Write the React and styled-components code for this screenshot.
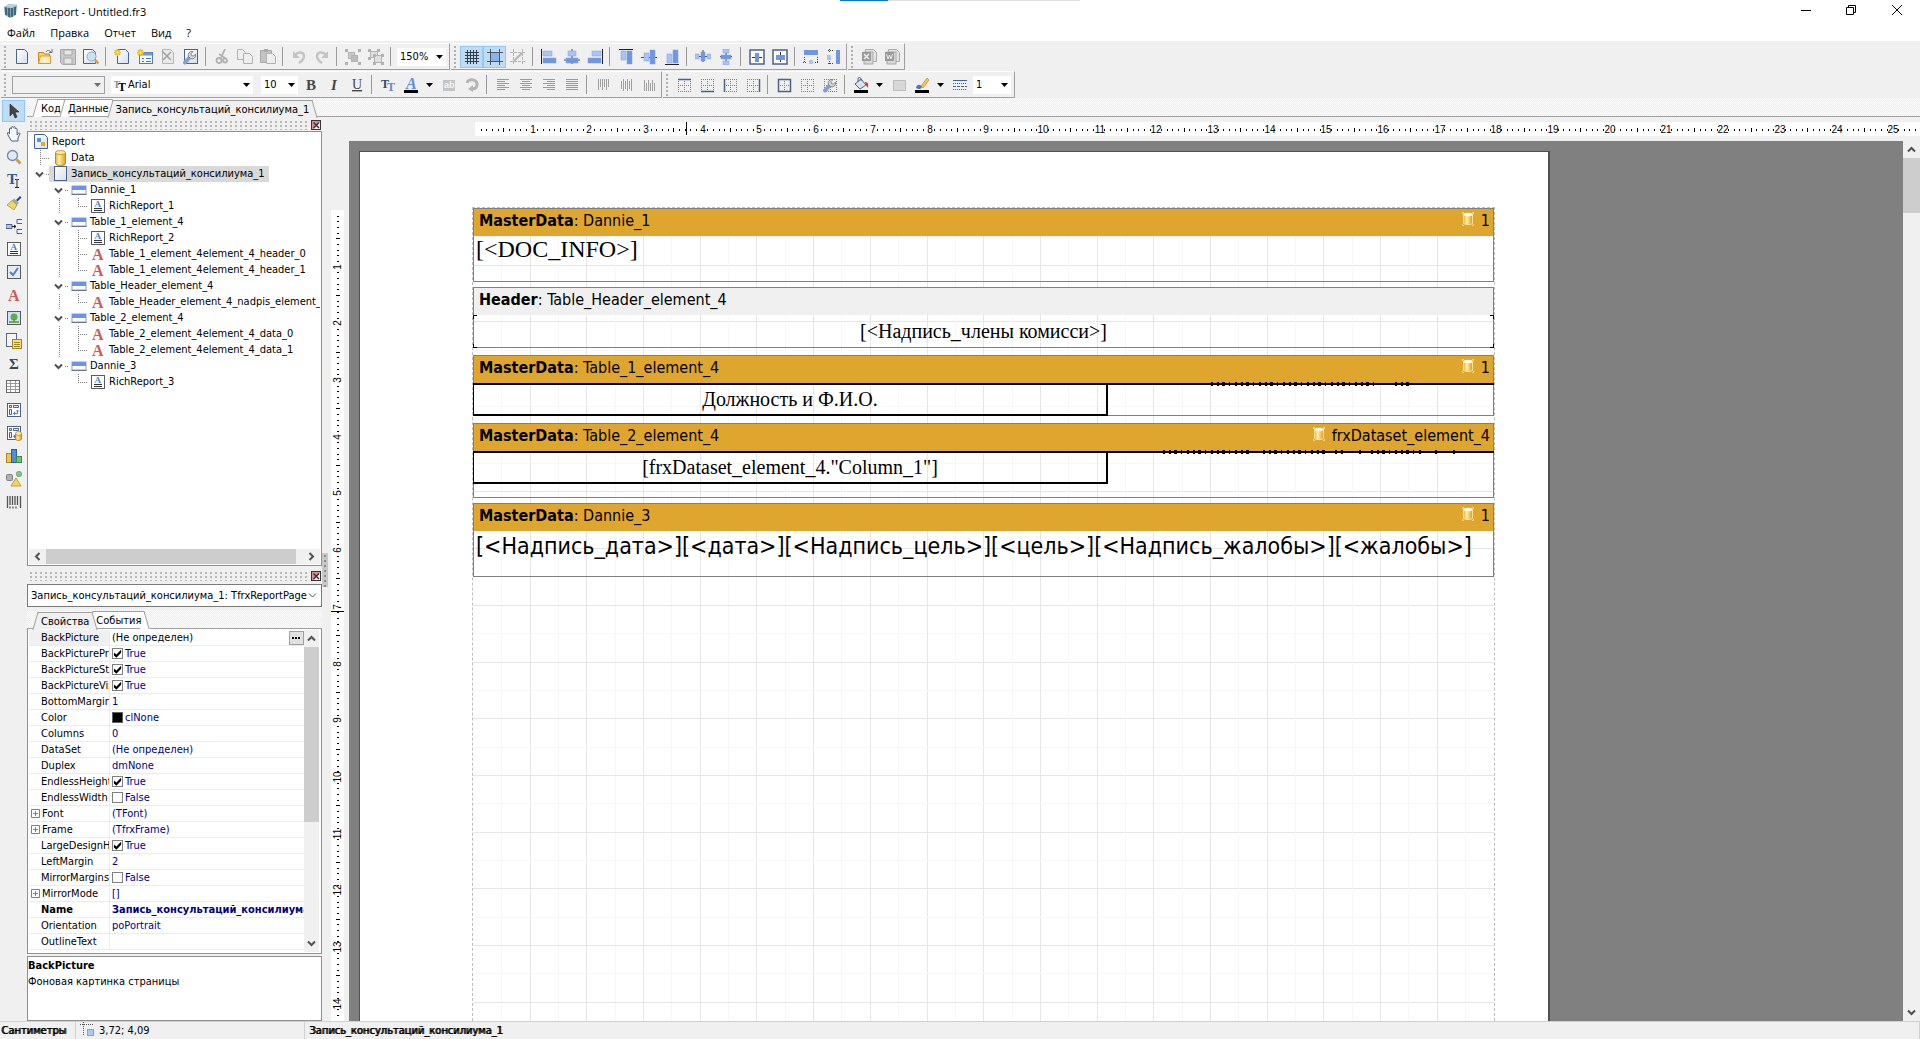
import React from 'react'
import styled, { createGlobalStyle, css } from 'styled-components'

const UI = '"DejaVu Sans Condensed", "Noto Sans", sans-serif'
const CM = 56.69

const GlobalStyle = createGlobalStyle`
    * { box-sizing: border-box; }
    body { margin: 0; font-family: ${UI}; font-size: 11px; color: #000; background: #f0f0f0; }
    button, select, input { font: inherit; color: inherit; margin: 0; padding: 0; border: 0; background: none; }
    ul { list-style: none; margin: 0; padding: 0; }
`

const hatch = css`
    background: repeating-conic-gradient(#fff 0 25%, #ececec 0 50%) 0 0 / 2px 2px;
`

const Window = styled.div`
    height: 100vh;
    display: flex;
    flex-direction: column;
    overflow: hidden;
`

/* ---------- title and menu ---------- */

const TitleBar = styled.header`
    position: relative;
    display: flex;
    align-items: flex-start;
    height: 24px;
    padding-left: 3px;
    background: #fff;
`

const Title = styled.h1`
    flex: 1;
    margin: 0;
    padding: 4px 0 0 5px;
    font: 400 11px/16px "Open Sans", "Noto Sans", sans-serif;
`

const AppIcon = styled.svg`
    margin-top: 3px;
`

const TopStrip = styled.div`
    position: absolute;
    top: 0;
    left: 840px;
    width: 240px;
    height: 1px;
    background: linear-gradient(90deg, #0078d7 20%, #e0e0e0 20%);
`

const WindowButton = styled.button`
    width: 45px;
    height: 20px;
    display: flex;
    align-items: center;
    justify-content: center;
    &:last-child { width: 47px; }
`

const Menu = styled.nav`
    display: flex;
    gap: 15px;
    height: 17px;
    padding-left: 7px;
    background: #fff;
`

const MenuItem = styled.button`
    font: 400 11px/17px "Open Sans", "Noto Sans", sans-serif;
`

/* ---------- toolbars ---------- */

const Toolbars = styled.div`
    display: flex;
    flex-direction: column;
    gap: 1px;
    padding: 2px 0 0 1px;
`

const ToolbarRow = styled.div`
    display: flex;
    gap: 1px;
`

const Band = styled.div`
    display: flex;
    align-items: center;
    height: 27px;
    padding-right: 1px;
    border-top: 1px solid #fff;
    border-right: 1px solid #a0a0a0;
    border-bottom: 1px solid #a0a0a0;
`

const Grip = styled.span`
    width: 3px;
    height: 22px;
    margin: 0 3px;
    background: radial-gradient(circle at 1px 1px, #b0b0b0 1px, transparent 1px) 0 0 / 3px 4px;
`

const Tool = styled.button`
    width: ${({ $narrow }) => ($narrow ? 15 : 23)}px;
    height: 22px;
    display: flex;
    align-items: center;
    justify-content: center;
    ${({ $on }) => $on && 'background: #c0dcf3; border: 1px solid #90c8f6;'}
`

const Separator = styled.span`
    width: 1px;
    height: 19px;
    margin: 0 4px 0 3px;
    background: #9a9a9a;
`

const Combo = styled.label`
    display: flex;
    align-items: center;
    width: ${({ $width }) => $width}px;
    height: 18px;
    margin: 0 ${({ $after }) => $after || 2}px 0 2px;
    padding: 0 3px;
    gap: 2px;
    background: ${({ $disabled }) => ($disabled ? '#f0f0f0' : '#fff')};
    border: ${({ $disabled }) => ($disabled ? '1px solid #a0a0a0' : '0')};
`

const Select = styled.select`
    flex: 1;
    min-width: 0;
    appearance: none;
    outline: 0;
`

const Arrow = ({ color = '#000' }) => (
    <svg width="7" height="4" viewBox="0 0 7 4"><path d="M0 0h7L3.5 4z" fill={color} /></svg>
)

const Chevron = ({ turn = 0, size = 9, color = '#505050', weight = 2 }) => (
    <svg width={size} height={size} viewBox="0 0 9 9">
        <path d="M1 2.5 4.5 6 8 2.5" transform={`rotate(${turn} 4.5 4.5)`} fill="none" stroke={color} strokeWidth={weight} />
    </svg>
)

/* ---------- icons ---------- */

const B1 = '#a9c4f7'
const B2 = '#6f97e0'
const NAVY = '#4a6288'
const OFF = '#b2b2b2'

const Sheet = ({ x = 2, y = 0, w = 12, h = 15, fill = 'url(#paper)', stroke = NAVY }) => (
    <path d={`M${x + 0.5} ${y + 0.5}h${w - 4}l3 3v${h - 4}h-${w - 1}z`} fill={fill} stroke={stroke} />
)

const Star = () => (
    <g stroke="#e8c02c" strokeWidth="1.6"><path d="M3.5 0v7M0 3.5h7M1 1l5 5M6 1 1 6" /><circle cx="3.5" cy="3.5" r="1" fill="#fff6b0" stroke="none" /></g>
)

const Cylinder = ({ x = 0, y = 0, w = 10, h = 14 }) => (
    <g transform={`translate(${x} ${y})`}>
        <path d={`M.5 2.5v${h - 5}a${w / 2 - 0.5} 2 0 0 0 ${w - 1} 0V2.5`} fill="url(#gold)" stroke="#c08a14" />
        <ellipse cx={w / 2} cy="2.5" rx={w / 2 - 0.5} ry="2" fill="#fbe9a8" stroke="#c08a14" strokeWidth=".8" />
    </g>
)

const Wrench = ({ color = '#7f9fd6', x = 0, y = 0 }) => (
    <g transform={`translate(${x} ${y})`}>
        <path d="M3 13.5 8 8" stroke={color} strokeWidth="4" strokeLinecap="round" />
        <path d="M8.5 9.5a3.6 3.6 0 0 0 5-4.4l-2 2-2-.5-.5-2 2-2a3.6 3.6 0 0 0-4.4 5z" fill="#d8d8d8" stroke="#6c7280" strokeWidth=".8" />
    </g>
)

const bars = (list) => list.map(([x, y, w, h], i) => (
    <rect key={i} x={x} y={y} width={w} height={h} fill={i % 2 ? B2 : B1} stroke="#7f9fe0" strokeWidth=".5" />
))

const textLines = (widths, align) => widths.map((w, i) => {
    const x = align === 'l' ? 2 : align === 'r' ? 14 - w : 8 - w / 2
    return <rect key={i} x={x} y={2 + i * 2} width={w} height="1" fill="#9a9a9a" />
})

const vertLines = (tops, heights) => tops.map((t, i) => (
    <rect key={i} x={3 + i * 2} y={t} width="1" height={heights[i]} fill="#a0a0a0" />
))

const dots = (
    <path d="M2 2.5h13M2 8.5h13M2 14.5h13M2.5 2v13M8.5 2v13M14.5 2v13" stroke="#808080" strokeDasharray="1 1" fill="none" />
)

const Glyph = styled.text`
    font-family: ${({ $sans }) => ($sans ? '"Liberation Sans", sans-serif' : '"Liberation Serif", serif')};
    font-weight: ${({ $light }) => ($light ? 400 : 700)};
    font-size: ${({ $size }) => $size || 15}px;
    font-style: ${({ $italic }) => ($italic ? 'italic' : 'normal')};
    text-decoration: ${({ $line }) => ($line ? 'underline' : 'none')};
`

const RichBox = (
    <>
        <rect x="1.5" y="1.5" width="13" height="13" fill="#fff" stroke="#5a5a5a" />
        <Glyph x="4.5" y="9" $size="9" fill="#4a78b8">A</Glyph>
        <path d="M4 10.5h8M4 12.5h8" stroke="#333" />
    </>
)

const CrossBox = (
    <>
        <rect x="1.5" y="1.5" width="13" height="13" fill="#fff" stroke={NAVY} />
        <path d="M3.5 3.5h2v2h-2zM7.5 3.5h5v2h-5zM3.5 7.5h2v5h-2z" fill="none" stroke={NAVY} />
        <path d="M7.5 11.5h4v-3M10 9.5l1.5-1.5L13 9.5M9 10l-1.5 1.5L9 13" fill="none" stroke="#4a78c8" />
    </>
)

const ICONS = {
    new: <Sheet />,
    open: <><path d="M1.5 14.5v-11h5l1 1.5h5v9z" fill="#f7cf6a" stroke="#c88a1a" /><path d="M3.5 7h10v7.5h-12z" fill="#fdf0c0" stroke="#d79a2a" /><path d="M9 3c1-2 3-2 5 0M15 0v3.5h-3" fill="none" stroke="#5a7090" /></>,
    save: <><path d="M.5.5h15v15h-13l-2-2z" fill="#c8c8c8" stroke="#a8a8a8" /><path d="M4 1h8v5H4zM4 9h8v6H4z" fill="#e6e6e6" stroke="#aaa" /></>,
    preview: <><Sheet x={0} w={13} /><circle cx="8.5" cy="7.5" r="4.5" fill="#c4e2f8" stroke="#9ab" /><path d="m12 11 3.500 3.5" stroke="#d8a050" strokeWidth="2.5" /></>,
    newPage: <><Sheet x={3} /><Star /></>,
    newDialog: <><rect x="2.5" y="3.5" width="13" height="11" fill="#f4f8ff" stroke="#5a7ab0" /><path d="M3 5h12" stroke="#6f97e0" strokeWidth="3" /><path d="M5 9.5h2M9 9.5h5M5 12.5h2M9 12.5h5" stroke="#4a78c8" /><Star /></>,
    deletePage: <><Sheet fill="#eaeaea" stroke="#b4b4b4" /><path d="m2 2 9 9M11 3 3 11" stroke="#a0a0a0" strokeWidth="1.5" /></>,
    pageSettings: <><rect x="1.500" y=".5" width="13" height="14" fill="url(#paper)" stroke={NAVY} /><Wrench x={-1} y={0} /></>,
    cut: <g stroke={OFF} fill="none" strokeWidth="1.8"><path d="m11 0-4 9M5 5l6 4" /><circle cx="5" cy="11.5" r="2.5" /><circle cx="11" cy="11.5" r="2" /></g>,
    copy: <><Sheet x={0} w={9} h={11} fill="#eee" stroke={OFF} /><Sheet x={6} y={4} w={10} h={11} fill="#eee" stroke={OFF} /></>,
    paste: <><path d="M.5 1.5h11v12H.5z" fill="#c4c4c4" stroke="#a8a8a8" /><path d="M4 0h4v3H4z" fill="#aaa" /><Sheet x={6} y={4} w={10} h={11} fill="#eee" stroke={OFF} /></>,
    undo: <><path d="M4 6c3-4 9-3 9 1 0 3-2 5-5 7" fill="none" stroke="#c4c4c4" strokeWidth="2.5" /><path d="M2 2v7h7z" fill="#c4c4c4" /></>,
    redo: <><path d="M12 6c-3-4-9-3-9 1 0 3 2 5 5 7" fill="none" stroke="#c4c4c4" strokeWidth="2.5" /><path d="M14 2v7H7z" fill="#c4c4c4" /></>,
    group: <g stroke={OFF}><rect x="3.5" y="3.5" width="6" height="6" fill="#ccc" /><rect x="6.5" y="6.5" width="6" height="6" fill="#bbb" /><path d="M0 0h3v3H0zM13 0h3v3h-3zM0 13h3v3H0zM13 13h3v3h-3z" fill={OFF} stroke="none" /></g>,
    ungroup: <g stroke={OFF} fill="#e0e0e0"><rect x="2.5" y="2.5" width="7" height="6" /><rect x="6.5" y="6.5" width="7" height="7" /><path d="M0 0h3v3H0zM9 0h3v3H9zM0 8h3v3H0zM5 5h3v3H5zM13 5h3v3h-3zM5 13h3v3H5zM13 13h3v3h-3z" fill={OFF} stroke="none" /></g>,
    grid: <path d="M1 3.5h14M1 6.5h14M1 9.5h14M1 12.5h14M3.5 1v14M6.5 1v14M9.5 1v14M12.5 1v14" stroke="#333c48" fill="none" />,
    snap: <><rect x="4" y="4" width="8" height="8" fill="#8db2f2" /><path d="M0 3.5h16M0 12.5h16M3.5 0v16M12.5 0v16" stroke="#4a5868" /></>,
    fit: <g stroke="#b4b4b4" fill="none"><path d="M0 3.5h16M0 12.5h16M3.5 0v16M12.5 0v16" strokeDasharray="3 1" /><path d="m4 12 8-8" strokeWidth="2" /></g>,
    alignLeft: <><path d="M.5 0v15" stroke="#222" />{bars([[2, 2, 9, 5], [2, 9, 13, 5]])}</>,
    alignCenter: <><path d="M8 0v15M0 11h16" stroke="#444" />{bars([[4, 2, 8, 5], [2, 9, 12, 5]])}</>,
    alignRight: <><path d="M15.5 0v15" stroke="#222" />{bars([[5, 2, 9, 5], [1, 9, 13, 5]])}</>,
    alignTop: <><path d="M1 .5h14" stroke="#222" />{bars([[3, 2, 5, 9], [9, 2, 5, 13]])}</>,
    alignMiddle: <><path d="M0 8.5h16" stroke="#444" />{bars([[3, 4, 5, 8], [9, 1, 5, 14]])}</>,
    alignBottom: <><path d="M1 15.5h14" stroke="#222" />{bars([[3, 5, 5, 9], [9, 1, 5, 13]])}</>,
    spaceH: <><path d="M2 7.5h12M8 1v12" stroke="#444" />{bars([[0, 5, 4, 5], [6, 3, 4, 9], [12, 5, 4, 5]])}</>,
    spaceV: <><path d="M8 2v12M2 7.5h12" stroke="#444" />{bars([[5, 0, 6, 4], [3, 6, 10, 4], [5, 12, 6, 4]])}</>,
    centerH: <><rect x="1" y="1" width="14" height="14" fill="#fff" stroke={NAVY} strokeWidth="1.5" /><path d="M3 8.5h10" stroke="#333" /><rect x="6" y="4" width="4" height="9" fill={B2} /></>,
    centerV: <><rect x="1" y="1" width="14" height="14" fill="#fff" stroke={NAVY} strokeWidth="1.5" /><path d="M8.5 3v10" stroke="#333" /><rect x="4" y="6" width="9" height="5" fill={B2} /></>,
    sameWidth: <><rect x="1" y="1" width="14" height="5" fill={B2} /><path d="M1.5 8v5M14.5 8v5M0 13.5h4M12 13.5h4" stroke="#444" strokeDasharray="1 1" /><rect x="6" y="11" width="4" height="4" fill={B1} /></>,
    sameHeight: <><rect x="10" y="1" width="4" height="14" fill={B2} /><path d="M2 1.5h6M2 14.5h6M3.5 0v4M3.5 12v4" stroke="#444" strokeDasharray="1 1" /><rect x="1" y="6" width="4" height="5" fill={B1} /></>,
    excel: <><path d="M4.5.5h8l3 3v9h-11z" fill="#e4e4e4" stroke="#aaa" /><rect x="3" y="3" width="9" height="12" fill="#d8d8d8" stroke="#aaa" /><rect x="1" y="3" width="9" height="9" fill="#999" /><path d="m3 5 5 5M8 5l-5 5" stroke="#eee" strokeWidth="1.5" /></>,
    word: <><path d="M4.5.5h8l3 3v9h-11z" fill="#e4e4e4" stroke="#aaa" /><rect x="3" y="3" width="9" height="12" fill="#d8d8d8" stroke="#aaa" /><rect x="1" y="3" width="9" height="9" fill="#999" /><path d="m2.5 5 1.5 5 1.5-4L7 10l1.5-5" stroke="#eee" fill="none" /></>,
    bold: <Glyph x="3" y="13" fill="#484848">B</Glyph>,
    italic: <Glyph x="5" y="13" $italic fill="#484848">I</Glyph>,
    underline: <Glyph x="3" y="12" $light $line $size="14" fill="#484848">U</Glyph>,
    fontSettings: <><Glyph x="1" y="11" $size="12" fill="#2e4a6e">T</Glyph><Glyph x="7" y="14" $size="12" fill="#6a8cc0">T</Glyph></>,
    fontColor: <><Glyph x="3" y="12" $italic $size="16" fill="#5b8ede">A</Glyph><path d="M1 13h14v3H1z" fill="#000" /></>,
    highlight: <><rect x="2" y="3" width="12" height="11" fill="#c4c4c4" /><Glyph x="3" y="11" $sans $size="9" fill="#f4f4f4">ab</Glyph></>,
    rotate: <><path d="M3 6c1-5 11-4 10 2 0 3-3 4-6 4" fill="none" stroke="#b4b4b4" strokeWidth="3" /><path d="M9 8v7l-5-3z" fill="#b4b4b4" /></>,
    textLeft: textLines([12, 8, 12, 8, 12, 8], 'l'),
    textCenter: textLines([12, 8, 12, 8, 12, 8], 'c'),
    textRight: textLines([12, 8, 12, 8, 12, 8], 'r'),
    textBlock: textLines([12, 12, 12, 12, 12, 12], 'l'),
    textTop: vertLines([2, 2, 2, 2, 2, 2], [11, 8, 11, 8, 11, 8]),
    textMiddle: vertLines([4, 2, 4, 2, 4, 2], [8, 12, 8, 12, 8, 12]),
    textBottom: vertLines([3, 6, 3, 6, 3, 6], [11, 8, 11, 8, 11, 8]),
    frameTop: <>{dots}<path d="M2 2.5h13" stroke={NAVY} strokeWidth="1.5" /></>,
    frameBottom: <>{dots}<path d="M2 14.5h13" stroke={NAVY} strokeWidth="1.5" /></>,
    frameLeft: <>{dots}<path d="M2.5 2v13" stroke={NAVY} strokeWidth="1.5" /></>,
    frameRight: <>{dots}<path d="M14.5 2v13" stroke={NAVY} strokeWidth="1.5" /></>,
    frameAll: <>{dots}<rect x="2.5" y="2.5" width="12" height="12" fill="none" stroke={NAVY} strokeWidth="1.5" /></>,
    frameNone: dots,
    frameEdit: <>{dots}<Wrench /></>,
    fillColor: <><path d="m2 7 6-5 5 6-6 4z" fill="#d7e4f2" stroke="#53657c" /><path d="M5 5V2c0-3 4-2 3 2" fill="none" stroke="#53657c" /><path d="M12 5c4 0 3 4 3 6l-2-3z" fill="#d62a1c" /><path d="M1 13h14v3H1z" fill="#000" /></>,
    fillSettings: <rect x="2.5" y="3.5" width="12" height="10" fill="#d8d8d8" stroke="#bdbdbd" />,
    lineColor: <><path d="M7 9 13 1l2 2-6 8z" fill="#f3c456" stroke="#b08020" strokeWidth=".6" /><path d="M2 11c1-4 4-4 6-1-1 2-3 3-6 1z" fill="#4f74ac" /><path d="M1 13h14v3H1z" fill="#000" /></>,
    lineStyle: <><path d="M1 3.5h14" stroke="#3e62a8" /><path d="M1 6.5h14M1 12.5h14" stroke="#3e62a8" strokeDasharray="1 1" /><path d="M1 9.5h14" stroke="#3e62a8" strokeDasharray="3 1" /></>,
    arrow: <path d="M4 1v12l3-3 2 5 2-1-2-5h4z" fill="#444" stroke="#222" strokeWidth=".6" />,
    hand: <path d="M5 15 2 10 .8 7c.5-1 1.500-.5 2.200.8V3c0-1.200 1.600-1.200 1.800 0V1.500c.3-1.200 1.800-1 1.900 0 .3-1.300 2-1.200 2 0V3c.3-1 1.800-1 1.900.3V9c1-2 2-2.500 3-1.500L11.500 12v3z" fill="#f4f7fc" stroke="#4a6288" transform="translate(.5)" />,
    zoom: <><circle cx="6.5" cy="6.5" r="5" fill="#dceafa" stroke="#7888a0" strokeWidth="1.3" /><path d="m10.5 10.5 4 4" stroke="#c8a040" strokeWidth="3" /></>,
    textEdit: <><Glyph x="1" y="12" $size="15" fill="#2e5a8e">T</Glyph><path d="M9 7.5h1.500l.5.500.5-.500H13M11 8v7M9 15.5h4" stroke="#222" fill="none" /></>,
    brush: <><path d="m10 5 4-4 1.500 1.500-4 4z" fill="#3b3f7c" /><path d="M8 3.500 13 8l-2 2-5-4.500z" fill="#9aa6c0" /><path d="m6 5.500 5 4.500-3 5-7-5z" fill="#efd668" stroke="#a88a24" strokeWidth=".7" /></>,
    insertBand: <><path d="M0 6.5h6v4H0z" fill={B1} stroke={NAVY} /><path d="M6 8.5h4M8 7l2 1.500L8 10" stroke="#222" fill="none" /><path d="M16 1.5h-5v4h5M16 11.5h-5v4h5" fill="#eef4ff" stroke={NAVY} /></>,
    rich: RichBox,
    check: <><rect x="1.5" y="1.5" width="13" height="13" fill="#e6ecf6" stroke="#5a5a5a" /><path d="m4 8 3 3 5-7" fill="none" stroke="#5a7ac8" strokeWidth="2" /></>,
    memo: <Glyph x="2" y="14" $size="16" fill="#cf5a5a">A</Glyph>,
    picture: <><rect x="1.5" y="1.5" width="13" height="13" fill="#cfe4fa" stroke="#5a5a5a" /><path d="M3 11h10v2H3z" fill="#78a848" /><circle cx="8" cy="7" r="3.5" fill="#5cae4a" /><path d="M8 9v3" stroke="#8a6030" /></>,
    subreport: <><rect x=".5" y=".5" width="10" height="13" fill="#f4f6fa" stroke="#5a6a80" /><rect x="6.5" y="6.5" width="9" height="9" fill="#f8e27c" stroke="#a08420" /><path d="M8 9.5h6M8 11.5h6M8 13.5h6" stroke="#a08420" /></>,
    sum: <Glyph x="3" y="13" $size="15" fill="#444">Σ</Glyph>,
    table: <><rect x=".5" y="1.5" width="13" height="12" fill="#fff" stroke="#6a6a6a" /><path d="M1 4.5h12M1 7.5h12M1 10.5h12M4.5 2v11M9.5 2v11" stroke="#9a9a9a" /></>,
    cross: CrossBox,
    dbCross: <>{CrossBox}<Cylinder x={9} y={6} w={7} h={10} /></>,
    chart: <><rect x=".5" y="5.5" width="5" height="9" fill="#f0c648" stroke="#b08820" /><rect x="5.5" y="1.5" width="5" height="13" fill="#4f8ce0" stroke="#2a5cb0" /><rect x="10.5" y="8.5" width="5" height="6" fill="#78c078" stroke="#3c8c3c" /></>,
    shapes: <><rect x=".5" y="3.5" width="6" height="6" rx="1" fill="#b0b0b0" stroke="#808080" /><circle cx="13" cy="3" r="2.700" fill="#7cc88a" stroke="#4f9e60" strokeWidth=".6" /><path d="m10 7 5 8H5z" fill="#f4d468" stroke="#d09840" /></>,
    barcode: <path d="M1.5 2v12M4 2v9M6.5 2v9M9 2v9M11.5 2v9M14.5 2v12M4 12.5v2M7 12.5v2M10 12.5v2" stroke="#555" strokeWidth="1.3" />,
    report: <><Sheet x={1} w={14} /><path d="M4 4h4v4H4z" fill="#4a9ed8" /><path d="M8 8h4v4H8z" fill="#f0a818" /></>,
    data: <Cylinder x={3} y={0} w={11} h={16} />,
    page: <rect x="2.5" y=".5" width="12" height="14" fill="url(#paper)" stroke={NAVY} />,
    band: <><rect x="1" y="4" width="14" height="8" fill="#fff" stroke="#8aa0c8" /><rect x="1" y="4" width="14" height="4" fill="#6c94e0" /><path d="M.5 12.5h15" stroke="#66758e" /></>,
}

const Icon = ({ name }) => (
    <svg width="16" height="16" viewBox="0 0 16 16" aria-hidden="true">{ICONS[name]}</svg>
)

const HiddenSvg = styled.svg`
    position: absolute;
`

const Defs = () => (
    <HiddenSvg width="0" height="0" aria-hidden="true">
        <defs>
            <linearGradient id="paper" x1="0" y1="0" x2="1" y2="1">
                <stop offset="0" stopColor="#fff" /><stop offset="1" stopColor="#d4dff2" />
            </linearGradient>
            <linearGradient id="gold">
                <stop offset="0" stopColor="#e8b02c" /><stop offset=".35" stopColor="#fff0b0" /><stop offset="1" stopColor="#e09c10" />
            </linearGradient>
        </defs>
    </HiddenSvg>
)

/* ---------- left tool column, tabs ---------- */

const Main = styled.main`
    flex: 1;
    min-height: 0;
    display: flex;
`

const ToolColumn = styled.div`
    width: 27px;
    display: flex;
    flex-direction: column;
    gap: 1px;
    padding: 2px 2px 0;
`

const Content = styled.div`
    flex: 1;
    min-width: 0;
    display: flex;
    flex-direction: column;
`

const Tabs = styled.div`
    display: flex;
    align-items: flex-end;
    height: 19px;
    padding-left: 8px;
    border-bottom: 1px solid #a0a0a0;
    ${hatch}
`

const Tab = styled.button`
    display: flex;
    height: 17px;
    margin-right: -5px;
    margin-bottom: ${({ $on }) => ($on ? -1 : 0)}px;
    line-height: 17px;
    position: relative;
    z-index: ${({ $on }) => ($on ? 1 : 0)};
    span {
        margin: 0 -3px;
        z-index: 1;
        border-top: 1px solid #a0a0a0;
        background: ${({ $on }) => ($on ? '#f0f0f0' : '#fff')};
    }
    &::before, &::after {
        content: '';
        width: 8px;
        height: 17px;
        border-top: 1px solid #a0a0a0;
        background: ${({ $on }) => ($on ? '#f0f0f0' : '#fff')};
    }
    &::before { border-left: 1px solid #a0a0a0; transform: skewX(-16deg); }
    &::after { border-right: 1px solid #a0a0a0; transform: skewX(16deg); }
`

const Columns = styled.div`
    flex: 1;
    min-height: 0;
    display: flex;
`

/* ---------- side panels ---------- */

const Side = styled.aside`
    width: 295px;
    display: flex;
    flex-direction: column;
`

const DragBar = styled.div`
    display: flex;
    align-items: center;
    height: ${({ $tall }) => ($tall ? 18 : 14)}px;
    padding: 2px 1px 0 3px;
    gap: 2px;
    &::before {
        content: '';
        flex: 1;
        height: 9px;
        background: radial-gradient(circle at 1px 1px, #b8b8b8 1px, transparent 1px) 0 0 / 5px 4px;
    }
`

const CloseButton = styled.button`
    width: 10px;
    height: 10px;
    display: flex;
`

const CloseBox = ({ label }) => (
    <CloseButton aria-label={label}>
        <svg width="10" height="10" viewBox="0 0 10 10">
            <rect x=".5" y=".5" width="9" height="9" fill="#f6f0f0" stroke="#3a3038" />
            <path d="M1 1h8v1L3 9H1z" fill="#d89090" />
            <path d="m2.5 2.5 5.5 5.5M8 2.5 2.5 8" stroke="#3a3038" strokeWidth="1.4" />
        </svg>
    </CloseButton>
)

const TreeBox = styled.div`
    height: 435px;
    display: flex;
    flex-direction: column;
    padding: 1px;
    background: #fff;
    border: 1px solid #909090;
`

const Tree = styled.ul`
    flex: 1;
    overflow: hidden;
    padding: 1px 0 0 1px;
`

const TreeRow = styled.li`
    display: flex;
    height: 16px;
    line-height: 16px;
    white-space: nowrap;
`

const Node = styled.span`
    display: flex;
    gap: 3px;
    padding: 0 4px 0 3px;
    background: ${({ $on }) => ($on ? '#d9d9d9' : 'none')};
    svg { flex: none; }
`

const vDots = 'repeating-linear-gradient(#808080 0 1px, transparent 1px 2px)'
const hDots = 'repeating-linear-gradient(90deg, #808080 0 1px, transparent 1px 2px)'
const guides = {
    ' ': 'none',
    '|': `${vDots} 10px 0 / 1px 16px no-repeat`,
    T: `${vDots} 10px 0 / 1px 16px no-repeat, ${hDots} 10px 8px / 12px 1px no-repeat`,
    L: `${vDots} 10px 0 / 1px 8px no-repeat, ${hDots} 10px 8px / 12px 1px no-repeat`,
    v: `${hDots} 16px 8px / 3px 1px no-repeat`,
}

const Guide = styled.span`
    width: 19px;
    flex: none;
    padding: 4px 0 0 5px;
    line-height: 0;
    background: ${({ $kind }) => guides[$kind]};
`

const ScrollBar = styled.div`
    display: flex;
    flex: none;
    flex-direction: ${({ $vertical }) => ($vertical ? 'column' : 'row')};
    ${({ $vertical }) => ($vertical ? 'width' : 'height')}: ${({ $size }) => $size || 15}px;
    background: #f0f0f0;
`

const ScrollButton = styled.button`
    width: 17px;
    height: 17px;
    flex: none;
    align-self: center;
    display: flex;
    align-items: center;
    justify-content: center;
`

const Thumb = styled.span`
    flex: ${({ $part }) => $part} 0 0;
    background: #cdcdcd;
`

const Rest = styled.span`
    flex: ${({ $part }) => $part} 0 0;
`

const ObjectCombo = styled.label`
    display: flex;
    align-items: center;
    height: 23px;
    margin-bottom: 3px;
    padding: 0 4px 0 3px;
    gap: 1px;
    background: #fff;
    border: 1px solid #7a7a7a;
`

const Inspector = styled.div`
    flex: 1;
    min-height: 0;
    display: flex;
    margin-bottom: 2px;
    padding: 1px 2px 1px 1px;
    background: #fff;
    border: 1px solid #909090;
    border-top: 0;
`

const PropsView = styled.div`
    flex: 1;
    min-width: 0;
    overflow: hidden;
`

const PropTable = styled.table`
    width: 100%;
    table-layout: fixed;
    border-spacing: 0;
`

const PropName = styled.th`
    width: 81px;
    height: 16px;
    padding: 0 0 0 ${({ $expand }) => ($expand ? 2 : 12)}px;
    overflow: hidden;
    white-space: nowrap;
    text-align: left;
    line-height: 15px;
    font-weight: ${({ $bold }) => ($bold ? 700 : 400)};
    background: ${({ $on }) => ($on ? '#f0f0f0' : '#fff')};
    border-bottom: 1px solid #ececec;
    border-right: 1px solid #ececec;
    svg { margin-right: 2px; vertical-align: -1px; }
`

const PropValue = styled.td`
    padding: 0 0 0 2px;
    overflow: hidden;
    white-space: nowrap;
    line-height: 15px;
    font-weight: ${({ $bold }) => ($bold ? 700 : 400)};
    color: ${({ $on }) => ($on ? '#000' : '#000080')};
    border-bottom: 1px solid #ececec;
    label, div { display: flex; align-items: center; gap: 2px; }
`

const Check = styled.input`
    appearance: none;
    width: 11px;
    height: 11px;
    border: 1px solid #808080;
    background: #fff;
    &:checked::before {
        content: '';
        display: block;
        height: 9px;
        background: #000;
        clip-path: polygon(10% 40%, 38% 62%, 90% 8%, 90% 42%, 38% 96%, 10% 72%);
    }
`

const Swatch = styled.span`
    width: 11px;
    height: 11px;
    background: #000;
    border: 1px solid #606060;
`

const DotsButton = styled.button`
    width: 15px;
    height: 14px;
    margin-left: auto;
    background: #e1e1e1;
    border: 1px solid #a0a0a0;
    line-height: 0;
`

const Plus = () => (
    <svg width="9" height="9" viewBox="0 0 9 9"><path d="M.5.5h8v8h-8zM2 4.5h5M4.5 2v5" fill="none" stroke="#808080" /></svg>
)

const Hint = styled.div`
    height: 65px;
    padding: 1px 0;
    line-height: 16px;
    background: #fff;
    border: 1px solid #909090;
`

const Splitter = styled.div`
    width: 9px;
    padding-top: 436px;
    &::before {
        content: '';
        display: block;
        width: 6px;
        height: 34px;
        background: radial-gradient(circle at 3px 3px, #8c8c8c 1px, #c8c8c8 1px) 0 0 / 6px 5px;
    }
`

/* ---------- designer ---------- */

const Designer = styled.section`
    flex: 1;
    min-width: 0;
    display: grid;
    grid-template-columns: 18px 1fr 17px;
    grid-template-rows: 24px 1fr;
`

const TopRuler = styled.div`
    grid-column: 2 / 4;
    margin: 5px 0 5px 126px;
    overflow: hidden;
    background: #fff;
`

const SideRuler = styled.div`
    grid-column: 1;
    margin: 69px 5px 0 0;
    overflow: hidden;
    background: #fff;
`

const Workspace = styled.div`
    min-width: 0;
    min-height: 0;
    overflow: hidden;
    padding: 10px 0 0 10px;
    background: #808080;
`

const Page = styled.div`
    width: 1191px;
    height: 100%;
    display: flex;
    padding: 55px 53px 0 112px;
    background: #fff;
    border: 1px solid #505050;
    border-right-width: 2px;
    border-bottom: 0;
`

const PrintArea = styled.div`
    position: relative;
    flex: 1;
    min-width: 0;
    border: 1px dashed #bdbdbd;
    border-bottom: 0;
`

const GridLayer = styled.svg`
    position: absolute;
    inset: 0;
    width: 100%;
    height: 100%;
`

const ReportBand = styled.section`
    position: relative;
    height: ${({ $height }) => $height}px;
    margin-bottom: ${({ $after }) => $after}px;
    border: 1px solid #808080;
`

const BandHeader = styled.h2`
    display: flex;
    gap: 7px;
    height: 27px;
    margin: 0;
    padding: 2px 3px 0 5px;
    font-size: 16px;
    font-weight: 400;
    line-height: 20px;
    background: ${({ $plain }) => ($plain ? '#f0f0f0' : '#dfa62f')};
    > :first-child { flex: 1; }
    svg { margin-top: 1px; }
`

const RichText = styled.div`
    padding-left: 2px;
    font: ${({ $serif }) => ($serif ? '24px/26px "Liberation Serif", serif' : `23px/31px ${UI}`)};
    white-space: nowrap;
`

const MemoText = styled.div`
    height: 31px;
    font: 20px/32px "Liberation Serif", serif;
    text-align: center;
    white-space: nowrap;
`

const TableLine = styled.div`
    margin: 0 -1px;
    border-top: 2px solid #000;
`

const TableCell = styled(MemoText)`
    width: 635px;
    line-height: 28px;
    border: solid #000;
    border-width: 0 2px 2px 1px;
`

const Sliver = styled.svg`
    position: absolute;
    top: 26px;
    right: ${({ $right }) => $right}px;
`

const Corner = styled.span`
    position: absolute;
    width: 4px;
    height: 4px;
    ${({ $at }) => $at.split(' ').map((side) => `border-${side}: 1px solid #000;`).join('')}
    ${({ $at }) => ($at.includes('left') ? 'left: -1px;' : 'right: -1px;')}
    ${({ $at }) => ($at.includes('top') ? 'top: 27px;' : 'bottom: -1px;')}
`

const RulerLabel = styled.text`
    font: 10px "Liberation Sans", sans-serif;
    text-anchor: middle;
`

function Ruler ({ vertical, length, cursor }) {
    const marks = []
    for (let i = 1; i < length * 10; i++) {
        const at = Math.round(i * CM / 10)
        const tall = i % 5 === 0
        marks.push({ i, at, start: tall ? 5 : 6, size: tall ? 4 : 2, label: i % 10 === 0 ? i / 10 : null })
    }
    // the side ruler has its numbers reading upwards
    if (vertical) {
        return (
            <svg width="13" height="100%">
                {marks.map((m) => (m.label
                    ? <RulerLabel key={m.i} transform={`translate(10 ${m.at}) rotate(-90)`}>{m.label}</RulerLabel>
                    : <rect key={m.i} x={m.start} y={m.at} width={m.size} height="1" />
                ))}
                <rect x="0" y={cursor} width="13" height="1" />
            </svg>
        )
    }
    return (
        <svg width="100%" height="14">
            {marks.map((m) => (m.label
                ? <RulerLabel key={m.i} x={m.at + 1} y="11">{m.label}</RulerLabel>
                : <rect key={m.i} x={m.at} y={m.start + 1} width="1" height={m.size} />
            ))}
            <rect x={cursor} y="0" width="1" height="13" />
        </svg>
    )
}

function DesignGrid () {
    const lines = []
    for (let i = 1; i < 60; i++) {
        const at = Math.round(i * CM / 2)
        const color = i % 2 ? '#f7f7f7' : '#e6e6e6'
        lines.push(<path key={i} d={`M0 ${at + 0.5}h1021`} stroke={color} />)
        if (at < 1020) lines.push(<path key={`v${i}`} d={`M${at + 0.5} 0v3000`} stroke={color} />)
    }
    return <GridLayer aria-hidden="true">{lines}</GridLayer>
}

function ReportObject ({ kind, name, source, height, after, children }) {
    return (
        <ReportBand $height={height} $after={after}>
            <BandHeader $plain={kind === 'Header'}>
                <span><b>{kind}</b>: {name}</span>
                {source && (
                    <svg width="12" height="14" viewBox="0 0 12 14">
                        <path d="M1.5 2v9.5c2 1.5 7 1.5 9 0V2z" fill="url(#gold)" stroke="#f8df98" />
                        <ellipse cx="6" cy="2.5" rx="4.5" ry="1.8" fill="#fffbe8" />
                        <path d="M0 0h2v1H1v1H0zM10 0h2v2h-1V1h-1zM0 12h1v1h1v1H0zM11 12h1v2h-2v-1h1z" fill="#f4d890" />
                    </svg>
                )}
                {source && <span>{source}</span>}
            </BandHeader>
            {children}
        </ReportBand>
    )
}

/* ---------- status bar ---------- */

const StatusBar = styled.footer`
    display: flex;
    height: 18px;
    border-top: 1px solid #d0d0d0;
    line-height: 18px;
`

const StatusCell = styled.div`
    display: flex;
    gap: 3px;
    width: ${({ $width }) => $width}px;
    padding-left: 4px;
    text-shadow: ${({ $bold }) => ($bold ? '1px 0 #000' : 'none')};
    border-right: 1px solid #d0d0d0;
    &:first-child { padding-left: 1px; }
    &:last-child { flex: 1; }
`

/* ---------- data ---------- */

const menu = ['Файл', 'Правка', 'Отчет', 'Вид', '?']

const standardTools = ['new', 'open', 'save', 'preview', '-', 'newPage', 'newDialog', 'deletePage', 'pageSettings', '-',
    'cut', 'copy', 'paste', '-', 'undo', 'redo', '-', 'group', 'ungroup', '-']
const alignTools = ['grid', 'snap', 'fit', '-', 'alignLeft', 'alignCenter', 'alignRight', '-', 'alignTop', 'alignMiddle',
    'alignBottom', '-', 'spaceH', 'spaceV', '-', 'centerH', 'centerV', '-', 'sameWidth', 'sameHeight']
const textTools = ['bold', 'italic', 'underline', '-', 'fontSettings', 'fontColor', 'v', 'highlight', 'rotate', '-',
    'textLeft', 'textCenter', 'textRight', 'textBlock', '-', 'textTop', 'textMiddle', 'textBottom']
const frameTools = ['frameTop', 'frameBottom', 'frameLeft', 'frameRight', '-', 'frameAll', 'frameNone', 'frameEdit', '-',
    'fillColor', 'v', 'fillSettings', 'lineColor', 'v', 'lineStyle']
const objectTools = ['arrow', 'hand', 'zoom', 'textEdit', 'brush', 'insertBand', 'rich', 'check', 'memo', 'picture',
    'subreport', 'sum', 'table', 'cross', 'dbCross', 'chart', 'shapes', 'barcode']

const PAGE_NAME = 'Запись_консультаций_консилиума_1'

// lead: one guide per level (line, tee, elbow or an open node)
const tree = [
    ['', 'report', 'Report'],
    ['T', 'data', 'Data'],
    ['v', 'page', PAGE_NAME],
    [' v', 'band', 'Dannie_1'],
    [' |L', 'rich', 'RichReport_1'],
    [' v', 'band', 'Table_1_element_4'],
    [' |T', 'rich', 'RichReport_2'],
    [' |T', 'memo', 'Table_1_element_4element_4_header_0'],
    [' |L', 'memo', 'Table_1_element_4element_4_header_1'],
    [' v', 'band', 'Table_Header_element_4'],
    [' |L', 'memo', 'Table_Header_element_4_nadpis_element_4'],
    [' v', 'band', 'Table_2_element_4'],
    [' |T', 'memo', 'Table_2_element_4element_4_data_0'],
    [' |L', 'memo', 'Table_2_element_4element_4_data_1'],
    [' v', 'band', 'Dannie_3'],
    ['  L', 'rich', 'RichReport_3'],
]

const properties = [
    { name: 'BackPicture', value: '(Не определен)', on: true },
    { name: 'BackPicturePrintable', value: true },
    { name: 'BackPictureStretched', value: true },
    { name: 'BackPictureVisible', value: true },
    { name: 'BottomMargin', value: '1' },
    { name: 'Color', value: 'clNone', swatch: true },
    { name: 'Columns', value: '0' },
    { name: 'DataSet', value: '(Не определен)' },
    { name: 'Duplex', value: 'dmNone' },
    { name: 'EndlessHeight', value: true },
    { name: 'EndlessWidth', value: false },
    { name: 'Font', value: '(TFont)', expand: true },
    { name: 'Frame', value: '(TfrxFrame)', expand: true },
    { name: 'LargeDesignHeight', value: true },
    { name: 'LeftMargin', value: '2' },
    { name: 'MirrorMargins', value: false },
    { name: 'MirrorMode', value: '[]', expand: true },
    { name: 'Name', value: PAGE_NAME, bold: true },
    { name: 'Orientation', value: 'poPortrait' },
    { name: 'OutlineText', value: '' },
]

const Tools = ({ items, on = [] }) => items.map((item, i) => {
    if (item === '-') return <Separator key={i} />
    if (item === 'v') return <Tool key={i} $narrow aria-label="more"><Arrow /></Tool>
    return <Tool key={i} $on={on.includes(item)} aria-label={item}><Icon name={item} /></Tool>
})

function Property ({ name, value, on, swatch, expand, bold }) {
    const isFlag = typeof value === 'boolean'
    return (
        <tr>
            <PropName scope="row" $on={on} $expand={expand} $bold={bold}>{expand && <Plus />}{name}</PropName>
            <PropValue $on={on} $bold={bold}>
                {isFlag && <label><Check type="checkbox" defaultChecked={value} />{value ? 'True' : 'False'}</label>}
                {!isFlag && (
                    <div>
                        {swatch && <Swatch />}
                        {value}
                        {on && (
                            <DotsButton aria-label="edit">
                                <svg width="9" height="2"><path d="M0 0h2v2H0zM3 0h2v2H3zM6 0h2v2H6z" /></svg>
                            </DotsButton>
                        )}
                    </div>
                )}
            </PropValue>
        </tr>
    )
}

function App () {
    return (
        <Window>
            <GlobalStyle />
            <Defs />
            <TitleBar>
                <AppIcon width="15" height="15" viewBox="0 0 15 15">
                    <path d="M1 4 6 1l8 1-1 10-6 3-5-3z" fill="#7fa3b4" />
                    <path d="M3 4v8M6 5v9M9 5v9M12 4v8" stroke="#2f5566" strokeWidth="1.5" />
                    <path d="m1 4 5-3 8 1-5 3z" fill="#b8d0da" />
                </AppIcon>
                <Title>FastReport - Untitled.fr3</Title>
                <TopStrip />
                <WindowButton aria-label="minimize"><svg width="10" height="10"><path d="M0 5.5h10" stroke="#000" /></svg></WindowButton>
                <WindowButton aria-label="restore">
                    <svg width="10" height="10"><path d="M.5 2.5h7v7h-7zM2.5 2V.5h7v7H8" fill="none" stroke="#000" /></svg>
                </WindowButton>
                <WindowButton aria-label="close"><svg width="10" height="10"><path d="m0 0 10 10M10 0 0 10" stroke="#000" /></svg></WindowButton>
            </TitleBar>
            <Menu>{menu.map((item) => <MenuItem key={item}>{item}</MenuItem>)}</Menu>

            <Toolbars>
                <ToolbarRow>
                    <Band>
                        <Grip />
                        <Tools items={standardTools} />
                        <Combo $width={49}>
                            <Select aria-label="zoom" defaultValue="150%"><option>150%</option></Select>
                            <Arrow />
                        </Combo>
                    </Band>
                    <Band><Grip /><Tools items={alignTools} on={['grid', 'snap']} /></Band>
                    <Band><Grip /><Tools items={['excel', 'word']} /></Band>
                </ToolbarRow>
                <ToolbarRow>
                    <Band>
                        <Grip />
                        <Combo $width={93} $after={4} $disabled>
                            <Select aria-label="style" disabled />
                            <Arrow color="#707070" />
                        </Combo>
                        <Combo $width={142} $after={6}>
                            <svg width="12" height="12" viewBox="0 0 12 12">
                                <Glyph x="-1" y="9" $size="11" fill="#909090">T</Glyph>
                                <Glyph x="4" y="12" $size="12">T</Glyph>
                            </svg>
                            <Select aria-label="font" defaultValue="Arial"><option>Arial</option></Select>
                            <Arrow />
                        </Combo>
                        <Combo $width={37} $after={1}>
                            <Select aria-label="size" defaultValue="10"><option>10</option></Select>
                            <Arrow />
                        </Combo>
                        <Tools items={textTools} />
                    </Band>
                    <Band>
                        <Grip />
                        <Tools items={frameTools} />
                        <Combo $width={38}>
                            <Select aria-label="line width" defaultValue="1"><option>1</option></Select>
                            <Arrow />
                        </Combo>
                    </Band>
                </ToolbarRow>
            </Toolbars>

            <Main>
                <ToolColumn><Tools items={objectTools} on={['arrow']} /></ToolColumn>
                <Content>
                    <Tabs>
                        <Tab><span>Код</span></Tab>
                        <Tab><span>Данные</span></Tab>
                        <Tab $on><span>{PAGE_NAME}</span></Tab>
                    </Tabs>
                    <Columns>
                        <Side>
                            <DragBar><CloseBox label="close tree" /></DragBar>
                            <TreeBox>
                                <Tree>
                                    {tree.map(([lead, icon, label]) => (
                                        <TreeRow key={label}>
                                            {lead.split('').map((kind, i) => (
                                                <Guide key={i} $kind={kind}>{kind === 'v' && <Chevron />}</Guide>
                                            ))}
                                            <Node $on={icon === 'page'}><Icon name={icon} />{label}</Node>
                                        </TreeRow>
                                    ))}
                                </Tree>
                                <ScrollBar>
                                    <ScrollButton aria-label="left"><Chevron turn={90} /></ScrollButton>
                                    <Thumb $part={250} />
                                    <Rest $part={7} />
                                    <ScrollButton aria-label="right"><Chevron turn={-90} /></ScrollButton>
                                </ScrollBar>
                            </TreeBox>
                            <DragBar $tall><CloseBox label="close inspector" /></DragBar>
                            <ObjectCombo>
                                <Select aria-label="object" defaultValue="page">
                                    <option value="page">{PAGE_NAME}: TfrxReportPage</option>
                                </Select>
                                <Chevron weight={1} />
                            </ObjectCombo>
                            <Tabs>
                                <Tab $on><span>Свойства</span></Tab>
                                <Tab><span>События</span></Tab>
                            </Tabs>
                            <Inspector>
                                <PropsView>
                                    <PropTable>
                                        <tbody>{properties.map((p) => <Property key={p.name} {...p} />)}</tbody>
                                    </PropTable>
                                </PropsView>
                                <ScrollBar $vertical>
                                    <ScrollButton aria-label="up"><Chevron turn={180} /></ScrollButton>
                                    <Thumb $part={175} />
                                    <Rest $part={113} />
                                    <ScrollButton aria-label="down"><Chevron /></ScrollButton>
                                </ScrollBar>
                            </Inspector>
                            <Hint><b>BackPicture</b><br />Фоновая картинка страницы</Hint>
                        </Side>
                        <Splitter />
                        <Designer>
                            <TopRuler><Ruler length={60} cursor={211} /></TopRuler>
                            <SideRuler><Ruler vertical length={60} cursor={401} /></SideRuler>
                            <Workspace>
                                <Page>
                                    <PrintArea>
                                        <DesignGrid />
                                        <ReportObject kind="MasterData" name="Dannie_1" source="1" height={74} after={5}>
                                            <RichText $serif>[&lt;DOC_INFO&gt;]</RichText>
                                        </ReportObject>
                                        <ReportObject kind="Header" name="Table_Header_element_4" height={61} after={7}>
                                            <MemoText>[&lt;Надпись_члены комисси&gt;]</MemoText>
                                            <Corner $at="top left" />
                                            <Corner $at="top right" />
                                            <Corner $at="bottom left" />
                                            <Corner $at="bottom right" />
                                        </ReportObject>
                                        <ReportObject kind="MasterData" name="Table_1_element_4" source="1" height={61} after={7}>
                                            <TableLine><TableCell>Должность и Ф.И.О.</TableCell></TableLine>
                                            <Sliver $right={81} width="201" height="4">
                                                <path d="M0 2h168M184 2h17" stroke="#000" strokeWidth="4" strokeDasharray="2 4 2 3 3 4 1 5" />
                                            </Sliver>
                                        </ReportObject>
                                        <ReportObject kind="MasterData" name="Table_2_element_4" source="frxDataset_element_4" height={75} after={5}>
                                            <TableLine><TableCell>[frxDataset_element_4."Column_1"]</TableCell></TableLine>
                                            <Sliver $right={37} width="293" height="4">
                                                <path d="M0 2h88M100 2h62M172 2h8M196 2h4M208 2h52M272 2h2M290 2h2" stroke="#000" strokeWidth="4" strokeDasharray="2 4 2 3 3 4 1 5" />
                                            </Sliver>
                                        </ReportObject>
                                        <ReportObject kind="MasterData" name="Dannie_3" source="1" height={74} after={0}>
                                            <RichText>[&lt;Надпись_дата&gt;][&lt;дата&gt;][&lt;Надпись_цель&gt;][&lt;цель&gt;][&lt;Надпись_жалобы&gt;][&lt;жалобы&gt;]</RichText>
                                        </ReportObject>
                                    </PrintArea>
                                </Page>
                            </Workspace>
                            <ScrollBar $vertical $size={17}>
                                <ScrollButton aria-label="page up"><Chevron turn={180} /></ScrollButton>
                                <Thumb $part={55} />
                                <Rest $part={791} />
                                <ScrollButton aria-label="page down"><Chevron /></ScrollButton>
                            </ScrollBar>
                        </Designer>
                    </Columns>
                </Content>
            </Main>

            <StatusBar>
                <StatusCell $width={76} $bold>Сантиметры</StatusCell>
                <StatusCell $width={229}>
                    <svg width="16" height="16" viewBox="0 0 16 16">
                        <path d="M0 2.5h14M3.5 0v14" stroke="#555" strokeDasharray="1 1" />
                        <rect x="7.5" y="7.5" width="6" height="6" fill="#a9c8fa" stroke="#7fa4e4" />
                    </svg>
                    3,72; 4,09
                </StatusCell>
                <StatusCell $bold>{PAGE_NAME}</StatusCell>
            </StatusBar>
        </Window>
    )
}

export default App
